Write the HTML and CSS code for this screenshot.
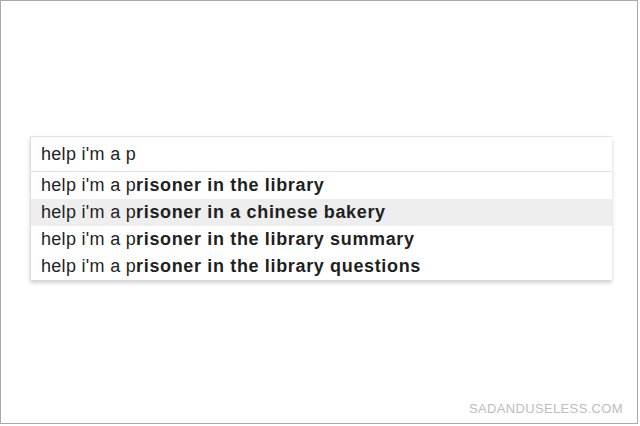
FILE: index.html
```html
<!DOCTYPE html>
<html lang="en">
<head>
  <meta charset="UTF-8">
  <title>help i'm a p</title>
  <link rel="stylesheet" href="styles.css">
</head>
<body>
  <div class="frame">
    <div class="search">
      <div class="query">help i'm a p</div>
      <ul class="suggestions">
        <li>help i'm a p<b>risoner in the library</b></li>
        <li class="active">help i'm a p<b>risoner in a chinese bakery</b></li>
        <li>help i'm a p<b>risoner in the library summary</b></li>
        <li>help i'm a p<b>risoner in the library questions</b></li>
      </ul>
    </div>
    <div class="credit">SADANDUSELESS.COM</div>
  </div>
</body>
</html>
```

FILE: styles.css
```css
/* Page */
body {
  margin: 0;
  font-family: 'Liberation Sans', Arial, sans-serif;
  background: #fff;
}

.frame {
  width: 636px;
  height: 287px;
  border: 1px solid #a9a9a9;
  display: flex;
  flex-direction: column;
  padding-top: 135px;
}

/* Search box */
.search {
  margin-left: 29px;
  width: 581px;
  border-left: 1px solid #dcdcdc;
  border-top: 1px solid #e0e0e0;
  box-shadow: 0 3px 4px rgba(0, 0, 0, 0.18);
}

.query {
  height: 34px;
  line-height: 34px;
  padding-left: 10px;
  font-size: 18px;
  letter-spacing: 0.3px;
  color: #1f1f1f;
  border-bottom: 1px solid #e0e0e0;
}

.suggestions {
  list-style: none;
  margin: 0;
  padding: 0;
}

.suggestions li {
  height: 27px;
  line-height: 27px;
  padding-left: 10px;
  font-size: 18px;
  letter-spacing: 0.3px;
  color: #1f1f1f;
}

.suggestions b {
  font-weight: bold;
  letter-spacing: 0.65px;
}

.suggestions li.active {
  background: #eeeeee;
}

/* Watermark */
.credit {
  margin-top: auto;
  align-self: flex-end;
  margin-right: 14px;
  margin-bottom: 7px;
  font-size: 13px;
  color: #bdbdbd;
  letter-spacing: 0.35px;
}
```
